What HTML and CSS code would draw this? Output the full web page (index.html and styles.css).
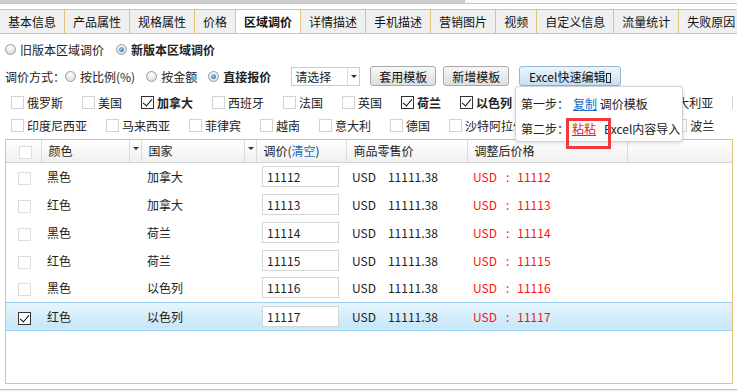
FILE: index.html
```html
<!DOCTYPE html>
<html lang="zh-CN">
<head>
    <meta charset="UTF-8">
    <meta name="viewport" content="width=device-width, initial-scale=1.0">
    <title>区域调价</title>
    <link rel="stylesheet" href="styles.css">
</head>
<body>
    <div class="scrollbar"><div class="thumb"></div></div>
    <div class="frame">
        <ul class="tabs">
            <li>基本信息</li>
            <li>产品属性</li>
            <li>规格属性</li>
            <li>价格</li>
            <li class="active">区域调价</li>
            <li>详情描述</li>
            <li>手机描述</li>
            <li>营销图片</li>
            <li>视频</li>
            <li>自定义信息</li>
            <li>流量统计</li>
            <li>失败原因</li>
        </ul>

        <div class="panel">
            <div class="version">
                <label class="radio"><span class="dot"></span>旧版本区域调价</label>
                <label class="radio on"><span class="dot"></span><b>新版本区域调价</b></label>
            </div>

            <div class="mode">
                <span class="mode-label">调价方式：</span>
                <label class="radio"><span class="dot"></span>按比例(%)</label>
                <label class="radio"><span class="dot"></span>按金额</label>
                <label class="radio on"><span class="dot"></span><b>直接报价</b></label>
                <div class="select"><span>请选择</span><i class="caret"></i></div>
                <button class="btn">套用模板</button>
                <button class="btn">新增模板</button>
                <button class="btn excel">Excel快速编辑<i class="tofu"></i></button>
            </div>

            <div class="countries">
                <div class="crow">
                    <label class="chk"><span class="box"></span>俄罗斯</label>
                    <label class="chk"><span class="box"></span>美国</label>
                    <label class="chk on"><span class="box"></span><b>加拿大</b></label>
                    <label class="chk"><span class="box"></span>西班牙</label>
                    <label class="chk"><span class="box"></span>法国</label>
                    <label class="chk"><span class="box"></span>英国</label>
                    <label class="chk on"><span class="box"></span><b>荷兰</b></label>
                    <label class="chk on"><span class="box"></span><b>以色列</b></label>
                    <label class="chk"><span class="box"></span>日本</label>
                    <label class="chk"><span class="box"></span>韩国</label>
                    <label class="chk"><span class="box"></span>澳大利亚</label>
                    <label class="chk"><span class="box"></span>巴西</label>
                </div>
                <div class="crow">
                    <label class="chk"><span class="box"></span>印度尼西亚</label>
                    <label class="chk"><span class="box"></span>马来西亚</label>
                    <label class="chk"><span class="box"></span>菲律宾</label>
                    <label class="chk"><span class="box"></span>越南</label>
                    <label class="chk"><span class="box"></span>意大利</label>
                    <label class="chk"><span class="box"></span>德国</label>
                    <label class="chk"><span class="box"></span>沙特阿拉伯</label>
                    <label class="chk"><span class="box"></span>土耳其</label>
                    <label class="chk"><span class="box"></span>巴西</label>
                    <label class="chk"><span class="box"></span>波兰</label>
                    <label class="chk"><span class="box"></span>瑞典</label>
                </div>
            </div>

            <div class="grid">
                <table>
                    <colgroup>
                        <col class="c-chk">
                        <col class="c-color">
                        <col class="c-arr">
                        <col class="c-country">
                        <col class="c-arr">
                        <col class="c-adj">
                        <col class="c-retail">
                        <col class="c-after">
                        <col>
                    </colgroup>
                    <thead>
                        <tr>
                            <th class="cell-chk"><span class="box"></span></th>
                            <th>颜色</th>
                            <th class="arr"><i class="caret"></i></th>
                            <th>国家</th>
                            <th class="arr"><i class="caret"></i></th>
                            <th>调价(<a class="link">清空</a>)</th>
                            <th>商品零售价</th>
                            <th>调整后价格</th>
                            <th class="last"></th>
                        </tr>
                    </thead>
                    <tbody id="rows"></tbody>
                </table>
            </div>
        </div>

        <div class="popup">
            <p>第一步：<a class="link step">复制</a> 调价模板</p>
            <p>第二步：<span class="mark"><a class="link red">粘粘</a></span>Excel内容导入</p>
        </div>
    </div>

    <script>
        const items = [
            { color: "黑色", country: "加拿大", price: "11112" },
            { color: "红色", country: "加拿大", price: "11113" },
            { color: "黑色", country: "荷兰", price: "11114" },
            { color: "红色", country: "荷兰", price: "11115" },
            { color: "黑色", country: "以色列", price: "11116" },
            { color: "红色", country: "以色列", price: "11117", selected: true }
        ];

        const tbody = document.getElementById('rows');
        items.forEach(function (item) {
            const row = document.createElement('tr');
            if (item.selected) row.className = 'selected';
            row.innerHTML =
                '<td class="cell-chk"><span class="box"></span></td>' +
                '<td colspan="2">' + item.color + '</td>' +
                '<td colspan="2">' + item.country + '</td>' +
                '<td><input class="price" type="text" value="' + item.price + '"></td>' +
                '<td><span class="cur">USD</span>11111.38</td>' +
                '<td class="after">USD<span class="colon">:</span>' + item.price + '</td>' +
                '<td></td>';
            tbody.appendChild(row);
        });
    </script>
</body>
</html>
```

FILE: styles.css
```css
* {
    box-sizing: border-box;
}
body {
    margin: 0;
    width: 737px;
    height: 391px;
    overflow: hidden;
    font-family: "Microsoft YaHei", "Noto Sans CJK SC", sans-serif;
    font-size: 12px;
    color: #222;
    background-color: #f0f0f0;
}
b {
    font-weight: bold;
}
.scrollbar {
    height: 3px;
    background-color: #fafafa;
}
.thumb {
    width: 465px;
    height: 3px;
    background-color: #cdcdcd;
}
.frame {
    position: relative;
    height: 387px;
    padding-top: 5px;
    background-color: #ffffff;
    border-top: 1px solid #e5c27c;
    border-bottom: 1px solid #e5c27c;
}

/* tabs */
.tabs {
    display: flex;
    margin: 0;
    padding: 0;
    list-style: none;
    height: 25px;
    overflow: hidden;
    white-space: nowrap;
    background-color: #f0f0f0;
    border-top: 1px solid #e5c27c;
    border-bottom: 1px solid #e5c27c;
}
.tabs li {
    flex: none;
    padding: 0 8px;
    line-height: 23px;
    color: #111;
    border-right: 1px solid #e5c27c;
}
.tabs li.active {
    background-color: #ffffff;
    font-weight: bold;
}

.panel {
    padding: 0 4px 0 5px;
}

/* radios */
.radio {
    display: inline-flex;
    align-items: center;
    white-space: nowrap;
}
.dot {
    position: relative;
    width: 11px;
    height: 11px;
    margin-right: 4px;
    border-radius: 50%;
    border: 1px solid #9c9c9c;
    background: radial-gradient(circle at 50% 30%, #ffffff, #d4d4d4);
}
.radio.on .dot::after {
    content: "";
    position: absolute;
    left: 2px;
    top: 2px;
    width: 5px;
    height: 5px;
    border-radius: 50%;
    background: radial-gradient(circle at 40% 35%, #8fd0f5, #1b67b3);
}
.version {
    display: flex;
    align-items: center;
    gap: 12px;
    height: 16px;
    margin-top: 7px;
}
.mode {
    display: flex;
    align-items: center;
    height: 20px;
    margin-top: 9px;
}
.mode .radio {
    margin-right: 11px;
}
.mode .radio.on {
    margin-right: 20px;
}

.select {
    position: relative;
    width: 69px;
    height: 19px;
    margin-right: 10px;
    padding-left: 3px;
    line-height: 17px;
    border: 1px solid #cccccc;
    background-color: #ffffff;
}
.select .caret {
    position: absolute;
    right: 0;
    top: 0;
    width: 12px;
    height: 17px;
    border-left: 1px solid #dddddd;
}
.caret::after {
    content: "";
    position: absolute;
    left: 3px;
    top: 7px;
    border-left: 3px solid transparent;
    border-right: 3px solid transparent;
    border-top: 3px solid #333333;
}
.btn {
    height: 20px;
    margin: 0 7px 0 0;
    padding: 0 8px;
    font-family: inherit;
    font-size: 12px;
    color: #111;
    border: 1px solid #a9a9a9;
    border-radius: 3px;
    background: linear-gradient(#f7f7f7, #dedede);
}
.btn.excel {
    margin-left: 3px;
    width: 102px;
    padding: 0 6px;
    border-color: #98b6d0;
    background: linear-gradient(#eaf4fc, #c9e1f4);
}
.tofu {
    display: inline-block;
    width: 5px;
    height: 10px;
    margin-left: 1px;
    vertical-align: -1px;
    border: 1px solid #222;
}

/* country checkboxes */
.countries {
    margin-top: 5px;
}
.crow {
    display: flex;
    align-items: center;
    gap: 19px;
    height: 23px;
    padding-left: 6px;
    white-space: nowrap;
    overflow: hidden;
}
.chk {
    flex: none;
    display: inline-flex;
    align-items: center;
}
.box {
    position: relative;
    display: inline-block;
    flex: none;
    width: 13px;
    height: 13px;
    border: 1px solid #d3d3d3;
    background-color: #ffffff;
}
.chk .box {
    margin-right: 3px;
}
.chk.on .box,
tr.selected .box {
    border-color: #333333;
}
.chk.on .box::after,
tr.selected .box::after {
    content: "";
    position: absolute;
    left: 3px;
    top: 0;
    width: 4px;
    height: 8px;
    border-right: 1.5px solid #111;
    border-bottom: 1.5px solid #111;
    transform: rotate(40deg);
}

/* grid */
.grid {
    height: 245px;
    margin-top: 2px;
    border: 1px solid #e5c27c;
}
table {
    width: 100%;
    border-collapse: collapse;
    table-layout: fixed;
}
.c-chk { width: 35px; }
.c-color { width: 88px; }
.c-arr { width: 12px; }
.c-country { width: 103px; }
.c-adj { width: 90px; }
.c-retail { width: 121px; }
.c-after { width: 160px; }
th {
    height: 22px;
    padding: 0 0 0 7px;
    font-weight: normal;
    text-align: left;
    color: #222;
    background: linear-gradient(#ffffff, #f0f0f0);
    border-right: 1px solid #dcdcdc;
    border-bottom: 1px solid #d4d4d4;
}
th.arr {
    position: relative;
    padding: 0;
}
th.last {
    border-right: none;
}
td {
    height: 28px;
    padding: 0 0 0 6px;
    white-space: nowrap;
}
.cell-chk {
    padding-left: 12px;
}
th.cell-chk {
    padding-left: 13px;
}
.cell-chk .box {
    vertical-align: middle;
    border-color: #dddddd;
}
.price {
    width: 77px;
    height: 21px;
    padding: 0 4px;
    font-family: inherit;
    font-size: 12px;
    color: #222;
    border: 1px solid #d6d6d6;
    background-color: #ffffff;
}
.cur {
    margin-right: 12px;
}
.after {
    color: #ff1010;
}
.colon {
    margin: 0 8px 0 9px;
}
tr.selected td {
    background: linear-gradient(#e6f5fd, #c5e6f8);
    border-top: 1px solid #9dd0f0;
    border-bottom: 1px solid #9dd0f0;
}
.link {
    color: #1a6ac8;
}
.popup .link {
    text-decoration: underline;
}
.link.step {
    margin-left: 4px;
}
.link.red {
    color: #e52222;
}

/* template popup */
.popup {
    position: absolute;
    left: 515px;
    top: 82px;
    width: 168px;
    height: 56px;
    padding: 4px 0 0 5px;
    white-space: nowrap;
    background-color: #ffffff;
    border: 1px solid #d2d2d2;
    border-radius: 4px;
    box-shadow: 0 1px 4px rgba(0, 0, 0, 0.15);
}
.popup p {
    margin: 0;
    line-height: 25px;
}
.mark {
    position: relative;
    padding: 0 8px 0 3px;
}
.mark::after {
    content: "";
    position: absolute;
    left: -3px;
    top: -2px;
    width: 39px;
    height: 25px;
    border: 3px solid #f03a3a;
}
```
